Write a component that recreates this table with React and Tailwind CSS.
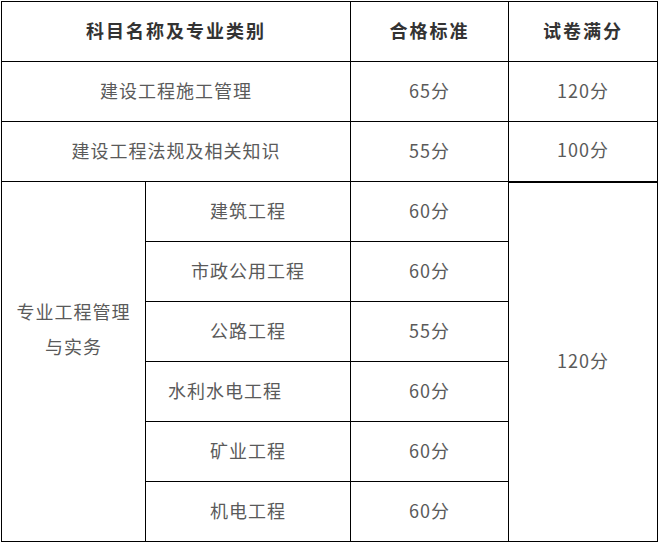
const font = { fontFamily: '"Noto Sans CJK SC", "Noto Sans", sans-serif' }

const cell = 'border border-black text-center align-middle p-0 pb-[3px] text-[18px] tracking-[1px] text-[#5a5a5a]'
const head = 'border border-black text-center align-middle p-0 pb-[3px] text-[18px] tracking-[2px] font-bold text-[#333333]'

const subjects = [
  { name: '建筑工程', score: '60分' },
  { name: '市政公用工程', score: '60分' },
  { name: '公路工程', score: '55分' },
  { name: '水利水电工程', score: '60分', shift: true },
  { name: '矿业工程', score: '60分' },
  { name: '机电工程', score: '60分' },
]

export default function App() {
  return (
    <div className="bg-white w-[660px] h-[543px] pt-px pl-px" style={font}>
      <table className="table-fixed border-collapse w-[656px]">
        <colgroup>
          <col className="w-[144px]" />
          <col className="w-[205px]" />
          <col className="w-[158px]" />
          <col className="w-[149px]" />
        </colgroup>
        <tbody>
          <tr className="h-[60px]">
            <td colSpan={2} className={head}>科目名称及专业类别</td>
            <td className={head}>合格标准</td>
            <td className={head}>试卷满分</td>
          </tr>
          <tr className="h-[60px]">
            <td colSpan={2} className={cell}>建设工程施工管理</td>
            <td className={cell}>65分</td>
            <td className={cell}>120分</td>
          </tr>
          <tr className="h-[60px]">
            <td colSpan={2} className={cell}>建设工程法规及相关知识</td>
            <td className={cell}>55分</td>
            <td className={`${cell} border-b-2`}>100分</td>
          </tr>
          {subjects.map((s, i) => (
            <tr key={s.name} className="h-[60px]">
              {i === 0 && (
                <td rowSpan={6} className={`${cell} leading-[35px] pb-[66px]`}>
                  专业工程管理
                  <br />
                  与实务
                </td>
              )}
              <td className={`${cell} ${s.shift ? 'pr-[46px]' : ''}`}>{s.name}</td>
              <td className={cell}>{s.score}</td>
              {i === 0 && (
                <td rowSpan={6} className={cell}>120分</td>
              )}
            </tr>
          ))}
        </tbody>
      </table>
    </div>
  )
}
